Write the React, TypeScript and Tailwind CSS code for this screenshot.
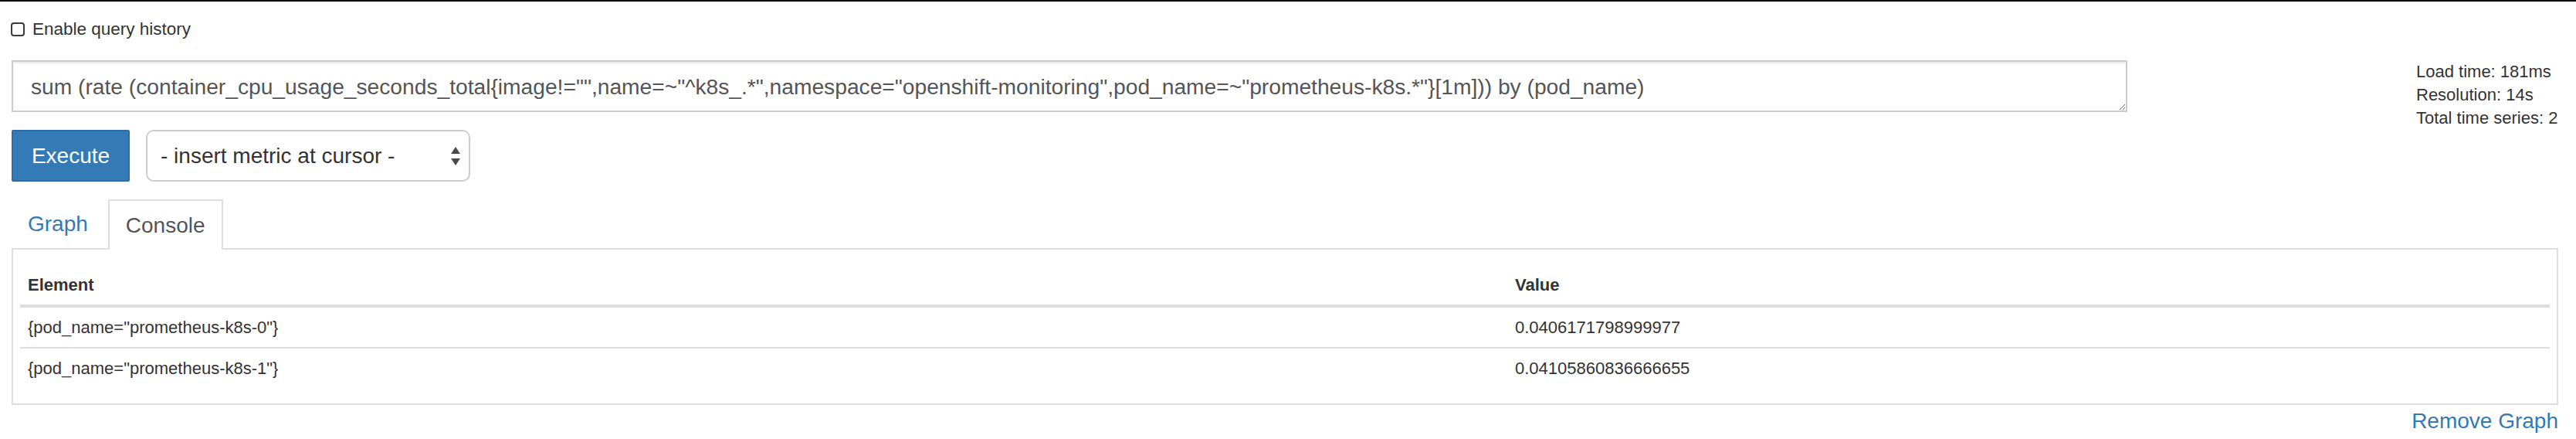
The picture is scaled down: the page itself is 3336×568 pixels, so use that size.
import React from 'react';

const QUERY =
  'sum (rate (container_cpu_usage_seconds_total{image!="",name=~"^k8s_.*",namespace="openshift-monitoring",pod_name=~"prometheus-k8s.*"}[1m])) by (pod_name)';

const rows = [
  { element: '{pod_name="prometheus-k8s-0"}', value: '0.0406171798999977' },
  { element: '{pod_name="prometheus-k8s-1"}', value: '0.04105860836666655' },
];

const SelectArrows: React.FC = () => (
  <svg width="14" height="26" viewBox="0 0 14 26" className="shrink-0">
    <path d="M7 1 L13 10 L1 10 Z" fill="#4a4a4a" />
    <path d="M7 25 L13 16 L1 16 Z" fill="#4a4a4a" />
  </svg>
);

const App: React.FC = () => {
  return (
    <div className="w-[3336px] h-[568px] overflow-hidden bg-white border-t-2 border-black font-['Liberation_Sans',Arial,sans-serif] text-[#333]">
      {/* query history toggle */}
      <div className="flex items-center gap-[10px] pl-[14px] pt-[20px] h-[52px]">
        <span className="w-[18px] h-[18px] rounded-[4px] border-[2.5px] border-[#3a3a3a] bg-white" />
        <span className="text-[22.5px] leading-[30px]">Enable query history</span>
      </div>

      {/* expression + stats */}
      <div className="flex pl-[15px] mt-[24px]">
        <div className="w-[2740px]">
          <textarea
            readOnly
            value={QUERY}
            className="block w-full h-[67px] border-2 border-[#ccc] shadow-[inset_0_2px_2px_rgba(0,0,0,0.075)] px-[23px] py-[12px] text-[28.2px] leading-[40px] text-[#555] outline-none"
          />
          <div className="flex items-center gap-[21px] mt-[23px]">
            <button className="w-[153px] h-[67px] rounded-[2px] bg-[#337ab7] border-2 border-[#2e6da4] text-white text-[28px]">
              Execute
            </button>
            <div className="w-[420px] h-[67px] rounded-[10px] border-2 border-[#ccc] bg-white flex items-center justify-between pl-[17px] pr-[10px] text-[28px] text-[#333]">
              <span>- insert metric at cursor -</span>
              <SelectArrows />
            </div>
          </div>
        </div>
        <div className="ml-[374px] text-[22px] leading-[30px]">
          <div>Load time: 181ms</div>
          <div>Resolution: 14s</div>
          <div>Total time series: 2</div>
        </div>
      </div>

      {/* tabs */}
      <div className="mx-[15px] mt-[23px] w-[3298px]">
        <div className="flex items-end h-[65px] border-b-2 border-[#ddd]">
          <div className="h-[63px] px-[21px] flex items-center text-[28px] text-[#337ab7] mr-[5px]">Graph</div>
          <div className="h-[65px] -mb-[2px] px-[21px] flex items-center text-[28px] text-[#555] bg-white border-2 border-b-0 border-[#ddd]">
            Console
          </div>
        </div>

        {/* console panel */}
        <div className="border-2 border-t-0 border-[#ddd] px-[9px] pt-[20px] pb-[20px]">
          <table className="w-full border-collapse text-[22px] leading-[31px]">
            <thead>
              <tr className="border-b-4 border-[#ddd]">
                <th className="w-[1926px] text-left font-bold px-[10px] py-[10px]">Element</th>
                <th className="text-left font-bold px-[10px] py-[10px]">Value</th>
              </tr>
            </thead>
            <tbody>
              {rows.map((r, i) => (
                <tr key={r.element} className={i > 0 ? 'border-t-2 border-[#ddd]' : ''}>
                  <td className="px-[10px] py-[10px]">{r.element}</td>
                  <td className="px-[10px] py-[10px]">{r.value}</td>
                </tr>
              ))}
            </tbody>
          </table>
        </div>

        <div className="flex justify-end mt-[6px]">
          <span className="text-[28px] leading-[30px] text-[#337ab7]">Remove Graph</span>
        </div>
      </div>
    </div>
  );
};

export default App;
